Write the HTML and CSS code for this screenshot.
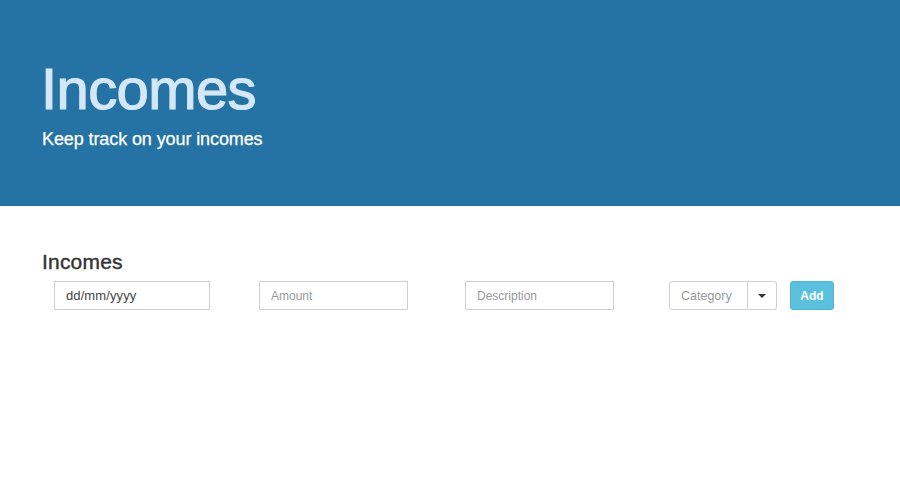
FILE: index.html
```html
<!DOCTYPE html>
<html>
<head>
<meta charset="utf-8">
<link rel="stylesheet" href="styles.css">
</head>
<body>
<header class="hero">
  <h1 class="hero-title">Incomes</h1>
  <p class="hero-sub">Keep track on your incomes</p>
</header>
<main class="content">
  <h2 class="section-title">Incomes</h2>
  <form class="entry-form">
    <div class="field field-date"><span class="date-text">dd/mm/yyyy</span></div>
    <input class="field field-amount" type="text" placeholder="Amount">
    <input class="field field-desc" type="text" placeholder="Description">
    <div class="select-group">
      <input class="field field-cat" type="text" placeholder="Category">
      <button type="button" class="caret-btn"><span class="caret"></span></button>
    </div>
    <button type="button" class="add-btn">Add</button>
  </form>
</main>
</body>
</html>
```
FILE: styles.css
```css
* { box-sizing: border-box; }
html, body { margin: 0; padding: 0; background: #fff; }
body { font-family: "Liberation Sans", Arial, sans-serif; color: #333; }

.hero {
  background: #2573a4;
  height: 206px;
  padding: 57px 0 0 41px;
}
.hero-title {
  margin: 0;
  font-size: 58px;
  font-weight: normal;
  line-height: 64px;
  color: #d3e7f7;
  letter-spacing: -0.6px;
  -webkit-text-stroke: 1.2px #d3e7f7;
}
.hero-sub {
  margin: 7px 0 0 1px;
  font-size: 18px;
  line-height: 22px;
  color: #fff;
  letter-spacing: -0.1px;
  -webkit-text-stroke: 0.25px #fff;
}

.content { padding: 43px 0 0 42px; }
.section-title {
  margin: 0;
  font-size: 21px;
  line-height: 25px;
  font-weight: normal;
  color: #333;
  letter-spacing: 0.2px;
  -webkit-text-stroke: 0.4px #333;
}
.entry-form {
  display: flex;
  align-items: center;
  margin-top: 7px;
  padding-left: 12px;
}
.field {
  height: 29px;
  border: 1px solid #cfcfcf;
  background: #fff;
  font-family: "Liberation Sans", Arial, sans-serif;
  font-size: 12px;
  padding: 0 11px;
  color: #555;
  outline: none;
}
.field::placeholder { color: #999; }
.field-date { width: 156px; display: flex; align-items: center; }
.date-text { color: #444; font-size: 13px; letter-spacing: 0.1px; }
.field-amount { width: 149px; margin-left: 49px; }
.field-desc { width: 149px; margin-left: 57px; }
.select-group { display: flex; margin-left: 55px; }
.field-cat { width: 79px; border-radius: 3px 0 0 3px; font-size: 12.5px; }
.caret-btn {
  width: 29px;
  height: 29px;
  border: 1px solid #cfcfcf;
  border-left: none;
  border-radius: 0 3px 3px 0;
  background: #fff;
  padding: 0;
  display: flex;
  align-items: center;
  justify-content: center;
}
.caret {
  width: 0; height: 0;
  border-left: 4px solid transparent;
  border-right: 4px solid transparent;
  border-top: 4px solid #333;
}
.add-btn {
  margin-left: 13px;
  width: 44px;
  height: 29px;
  border: 1px solid #4bb5d7;
  border-radius: 3px;
  background: #5bc0de;
  color: #fff;
  font-family: "Liberation Sans", Arial, sans-serif;
  font-size: 12px;
  font-weight: bold;
  padding: 0;
}
```
